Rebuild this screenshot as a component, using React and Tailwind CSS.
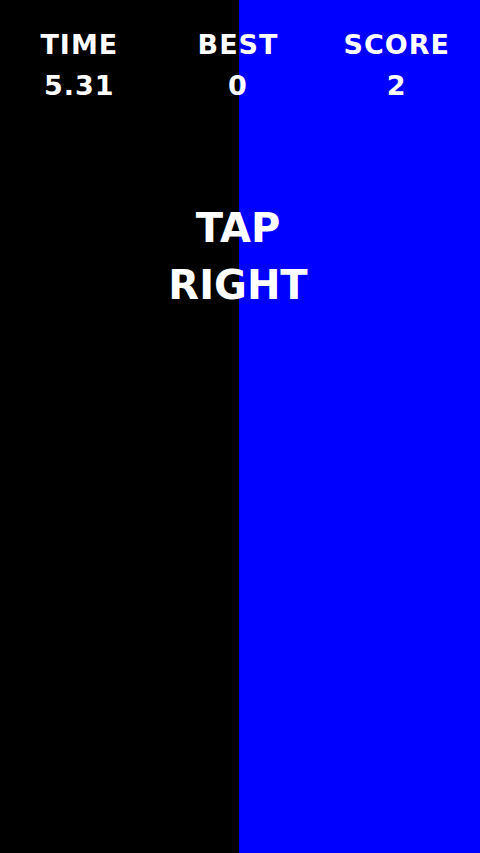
export default function App() {
  return (
    <div
      className="w-[480px] h-[853px] bg-[linear-gradient(to_right,#000000_239px,#0000ff_239px)] text-white flex flex-col"
      style={{ fontFamily: '"DejaVu Sans", sans-serif' }}
    >
      <div className="grid grid-cols-3 pt-[24px] pr-[4px] font-bold text-[27px] leading-[41px] tracking-[1px] text-center">
        <div className="flex flex-col items-center">
          <span>TIME</span>
          <span>5.31</span>
        </div>
        <div className="flex flex-col items-center">
          <span>BEST</span>
          <span>0</span>
        </div>
        <div className="flex flex-col items-center">
          <span>SCORE</span>
          <span>2</span>
        </div>
      </div>
      <div className="mt-[94px] flex flex-col items-center font-bold text-[40px] leading-[57px] pr-[4px]">
        <span>TAP</span>
        <span>RIGHT</span>
      </div>
    </div>
  );
}
